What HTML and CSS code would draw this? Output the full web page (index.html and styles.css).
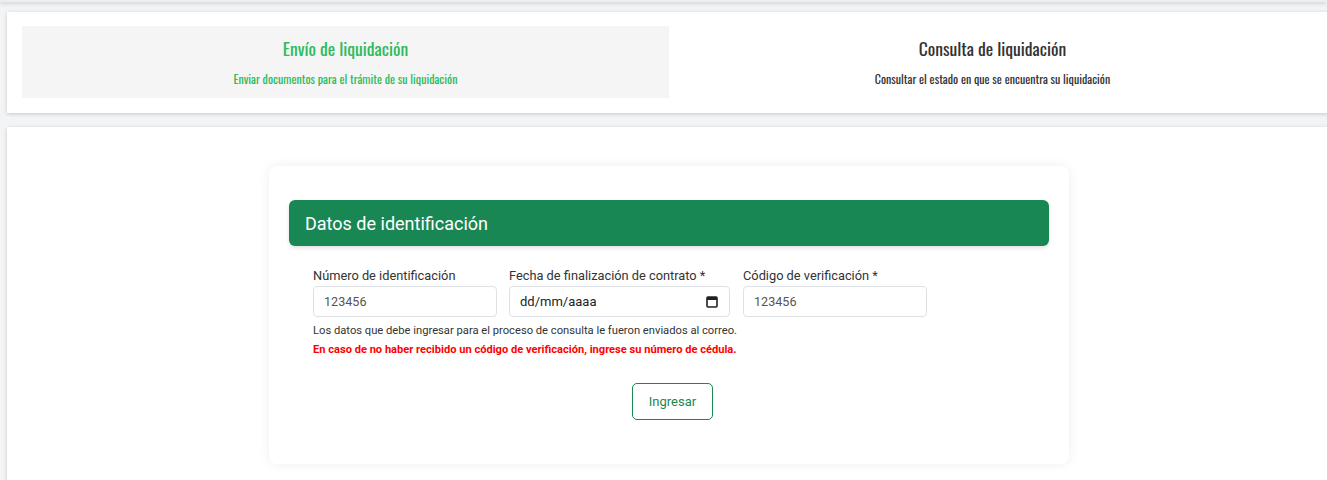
FILE: index.html
```html
<!DOCTYPE html>
<html lang="es">
<head>
<meta charset="utf-8">
<title>Liquidación</title>
<link rel="stylesheet" href="styles.css">
</head>
<body>
<div class="topbar"></div>
<div class="page">
  <section class="card tabs-card">
    <div class="tabs">
      <div class="tab active">
        <h2 class="tab-title">Envío de liquidación</h2>
        <p class="tab-sub">Enviar documentos para el trámite de su liquidación</p>
      </div>
      <div class="tab">
        <h2 class="tab-title">Consulta de liquidación</h2>
        <p class="tab-sub">Consultar el estado en que se encuentra su liquidación</p>
      </div>
    </div>
  </section>
  <section class="card main-card">
    <div class="form-card">
      <div class="form-header">Datos de identificación</div>
      <div class="form-body">
        <div class="fields">
          <div class="field f1">
            <label class="label">Número de identificación</label>
            <div class="input">123456</div>
          </div>
          <div class="field f2">
            <label class="label">Fecha de finalización de contrato *</label>
            <div class="input date">
              <span class="date-text">dd/mm/aaaa</span>
              <svg class="cal" width="12" height="13" viewBox="0 0 12 13"><rect x="1" y="2" width="10" height="10" rx="1" fill="none" stroke="#222" stroke-width="1.6"/><rect x="1" y="2" width="10" height="3" fill="#222"/></svg>
            </div>
          </div>
          <div class="field f3">
            <label class="label">Código de verificación *</label>
            <div class="input">123456</div>
          </div>
        </div>
        <p class="help">Los datos que debe ingresar para el proceso de consulta le fueron enviados al correo.</p>
        <p class="warn">En caso de no haber recibido un código de verificación, ingrese su número de cédula.</p>
        <div class="actions">
          <button class="btn">Ingresar</button>
        </div>
      </div>
    </div>
  </section>
</div>
</body>
</html>
```
FILE: styles.css
```css
html, body {
  margin: 0;
  padding: 0;
}
body {
  background: #f3f4f6;
  font-family: Roboto, "Liberation Sans", sans-serif;
  overflow: hidden;
  height: 480px;
}
.topbar {
  height: 2px;
  background: #eceef0;
  box-shadow: 0 1px 4px rgba(0,0,0,0.25);
}
.page {
  width: 1324px;
  margin: 10px 0 0 7px;
  display: flex;
  flex-direction: column;
  gap: 14px;
}
.card {
  background: #fff;
  box-shadow: 0 1px 4px rgba(0,0,0,0.18);
}
.tabs-card {
  padding: 14px 15px 15px;
}
.tabs {
  display: grid;
  grid-template-columns: 1fr 1fr;
}
.tab {
  height: 72px;
  display: flex;
  flex-direction: column;
  align-items: center;
  box-sizing: border-box;
  padding-top: 11px;
}
.tab.active {
  background: #f5f5f5;
}
.tab-title {
  margin: 0;
  font-family: "Oswald", "Roboto Condensed", "DejaVu Sans Condensed", sans-serif;
  font-stretch: condensed;
  font-weight: 400;
  font-size: 17.6px;
  line-height: 22px;
  color: #333;
}
.tab-sub {
  margin: 12px 0 0;
  font-family: "Oswald", "Roboto Condensed", "DejaVu Sans Condensed", sans-serif;
  font-stretch: condensed;
  font-size: 12px;
  line-height: 15px;
  color: #333;
}
.tab.active .tab-title,
.tab.active .tab-sub {
  color: #2dbb5e;
}
.main-card {
  padding: 39px 0 0;
  height: 400px;
  display: flex;
  justify-content: center;
  align-items: flex-start;
}
.form-card {
  width: 800px;
  box-sizing: border-box;
  background: #fff;
  border-radius: 8px;
  box-shadow: 0 0 12px rgba(0,0,0,0.07);
  padding: 34px 20px 44px;
}
.form-header {
  height: 46px;
  box-sizing: border-box;
  background: #198754;
  color: #fff;
  border-radius: 6px;
  padding: 0 16px;
  display: flex;
  align-items: center;
  font-size: 18px;
  box-shadow: 0 2px 4px rgba(0,0,0,0.12);
}
.form-body {
  padding: 21px 24px 0;
}
.fields {
  display: flex;
  gap: 12px;
}
.field {
  display: flex;
  flex-direction: column;
  gap: 2px;
}
.f1 { width: 184px; }
.f2 { width: 221px; }
.f3 { width: 184px; margin-left: 1px; }
.label {
  font-size: 12.8px;
  line-height: 17px;
  color: #333;
  white-space: nowrap;
}
.input {
  height: 31px;
  box-sizing: border-box;
  border: 1px solid #dee2e6;
  border-radius: 4px;
  padding: 0 10px;
  display: flex;
  align-items: center;
  font-size: 12.6px;
  color: #555;
}
.input.date {
  justify-content: space-between;
  color: #222;
  padding: 0 11px 0 10px;
  font-size: 13px;
}
.cal { display: block; }
.help {
  margin: 6px 0 0;
  font-size: 11.2px;
  line-height: 15px;
  color: #333;
}
.warn {
  margin: 4px 0 0;
  font-size: 11.1px;
  line-height: 15px;
  font-weight: 700;
  color: #ff0000;
}
.actions {
  display: flex;
  justify-content: center;
  margin-top: 26px;
  padding-left: 7px;
}
.btn {
  width: 81px;
  height: 37px;
  background: #fff;
  border: 1px solid #198754;
  border-radius: 5px;
  color: #198754;
  font-family: Roboto, "Liberation Sans", sans-serif;
  font-size: 13px;
  cursor: pointer;
}
```
